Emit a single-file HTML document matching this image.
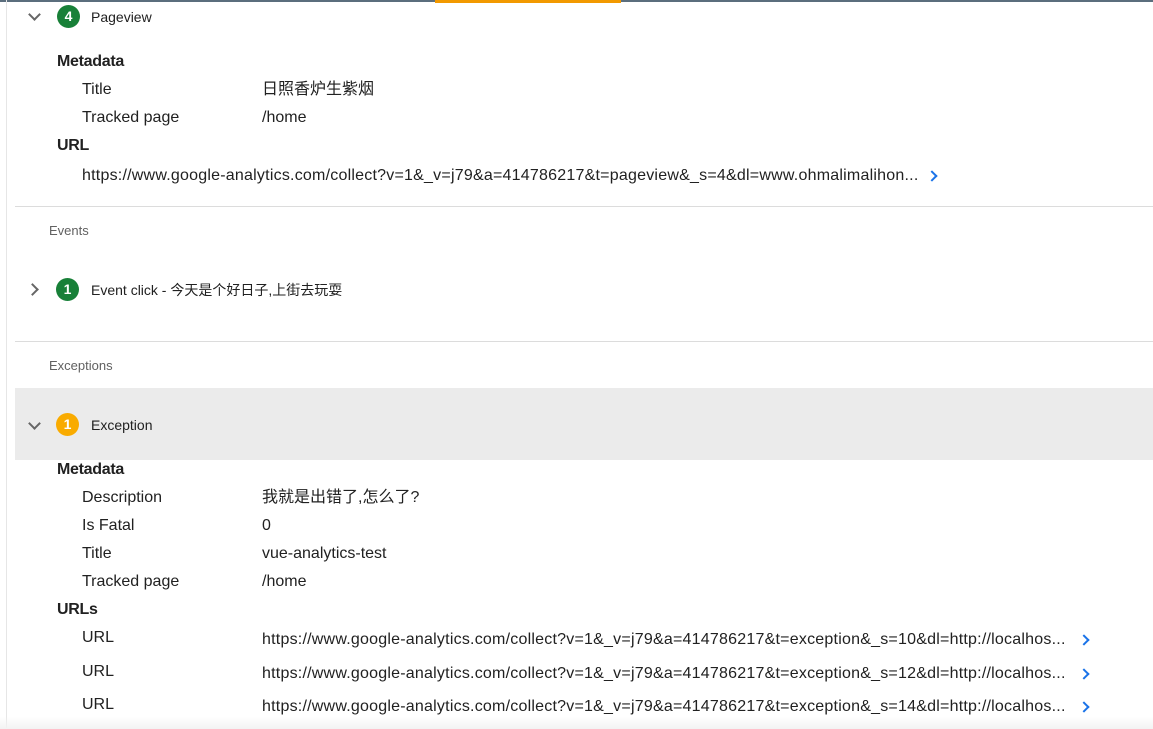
<!DOCTYPE html>
<html><head><meta charset="utf-8"><style>
body{margin:0;width:1153px;height:729px;overflow:hidden;background:#fff;font-family:"Liberation Sans","Noto Sans CJK SC",sans-serif;color:#212121;position:relative}
.a{position:absolute;white-space:nowrap;line-height:20px}
.t{font-size:16px}
.s{font-size:14px}
.h{font-size:16px;font-weight:bold;letter-spacing:-0.3px}
.g{color:#616161;font-size:13px}
.u{font-size:16px;letter-spacing:0.22px}
.badge{position:absolute;width:23px;height:23px;border-radius:50%;color:#fff;font-size:14px;font-weight:bold;text-align:center;line-height:23px}
.line{position:absolute;left:15px;right:0;height:1px;background:#dcdcdc}
.chev{position:absolute;width:7px;height:7px;border-right:2px solid #666;border-bottom:2px solid #666}
.blue{position:absolute;width:6px;height:6px;border-right:2px solid #1a73e8;border-top:2px solid #1a73e8;transform:rotate(45deg)}
</style></head><body>
<div class="a" style="left:0;top:0;width:1153px;height:2px;background:#5b6e7d"></div>
<div class="a" style="left:435px;top:0;width:186px;height:3px;background:#f29900"></div>
<div class="a" style="left:6px;top:0;width:1px;height:729px;background:#e6e6e6"></div>

<div class="chev" style="left:30px;top:10px;transform:rotate(45deg)"></div>
<div class="badge" style="left:57px;top:5px;background:#188038">4</div>
<div class="a s" style="left:91px;top:7px">Pageview</div>
<div class="a h" style="left:57px;top:52px">Metadata</div>
<div class="a t" style="left:82px;top:80px">Title</div>
<div class="a t" style="left:262px;top:80px">日照香炉生紫烟</div>
<div class="a t" style="left:82px;top:108px">Tracked page</div>
<div class="a t" style="left:262px;top:108px">/home</div>
<div class="a h" style="left:57px;top:136px">URL</div>
<div class="a u" style="left:82px;top:166px">https://www.google-analytics.com/collect?v=1&amp;_v=j79&amp;a=414786217&amp;t=pageview&amp;_s=4&amp;dl=www.ohmalimalihon...</div>
<div class="blue" style="left:928px;top:172px"></div>
<div class="line" style="top:206px"></div>

<div class="a g" style="left:49px;top:221px">Events</div>
<div class="chev" style="left:28px;top:285px;transform:rotate(-45deg)"></div>
<div class="badge" style="left:56px;top:278px;background:#188038">1</div>
<div class="a s" style="left:91px;top:280px">Event click - 今天是个好日子,上街去玩耍</div>
<div class="line" style="top:341px"></div>

<div class="a g" style="left:49px;top:356px">Exceptions</div>
<div class="a" style="left:15px;top:388px;width:1138px;height:72px;background:#ebebeb"></div>
<div class="chev" style="left:30px;top:419px;transform:rotate(45deg)"></div>
<div class="badge" style="left:56px;top:413px;background:#f9ab00">1</div>
<div class="a s" style="left:91px;top:415px">Exception</div>
<div class="a h" style="left:57px;top:460px">Metadata</div>
<div class="a t" style="left:82px;top:488px">Description</div>
<div class="a t" style="left:262px;top:488px">我就是出错了,怎么了?</div>
<div class="a t" style="left:82px;top:516px">Is Fatal</div>
<div class="a t" style="left:262px;top:516px">0</div>
<div class="a t" style="left:82px;top:544px">Title</div>
<div class="a t" style="left:262px;top:544px">vue-analytics-test</div>
<div class="a t" style="left:82px;top:572px">Tracked page</div>
<div class="a t" style="left:262px;top:572px">/home</div>
<div class="a h" style="left:57px;top:600px">URLs</div>
<div class="a t" style="left:82px;top:628px">URL</div>
<div class="a u" style="left:262px;top:630px">https://www.google-analytics.com/collect?v=1&amp;_v=j79&amp;a=414786217&amp;t=exception&amp;_s=10&amp;dl=http://localhos...</div>
<div class="blue" style="left:1080px;top:636px"></div>
<div class="a t" style="left:82px;top:662px">URL</div>
<div class="a u" style="left:262px;top:664px">https://www.google-analytics.com/collect?v=1&amp;_v=j79&amp;a=414786217&amp;t=exception&amp;_s=12&amp;dl=http://localhos...</div>
<div class="blue" style="left:1080px;top:670px"></div>
<div class="a t" style="left:82px;top:695px">URL</div>
<div class="a u" style="left:262px;top:697px">https://www.google-analytics.com/collect?v=1&amp;_v=j79&amp;a=414786217&amp;t=exception&amp;_s=14&amp;dl=http://localhos...</div>
<div class="blue" style="left:1080px;top:703px"></div>
<div class="a" style="left:0;top:717px;width:1153px;height:12px;background:linear-gradient(#fff0,#f3f3f3)"></div>
</body></html>
